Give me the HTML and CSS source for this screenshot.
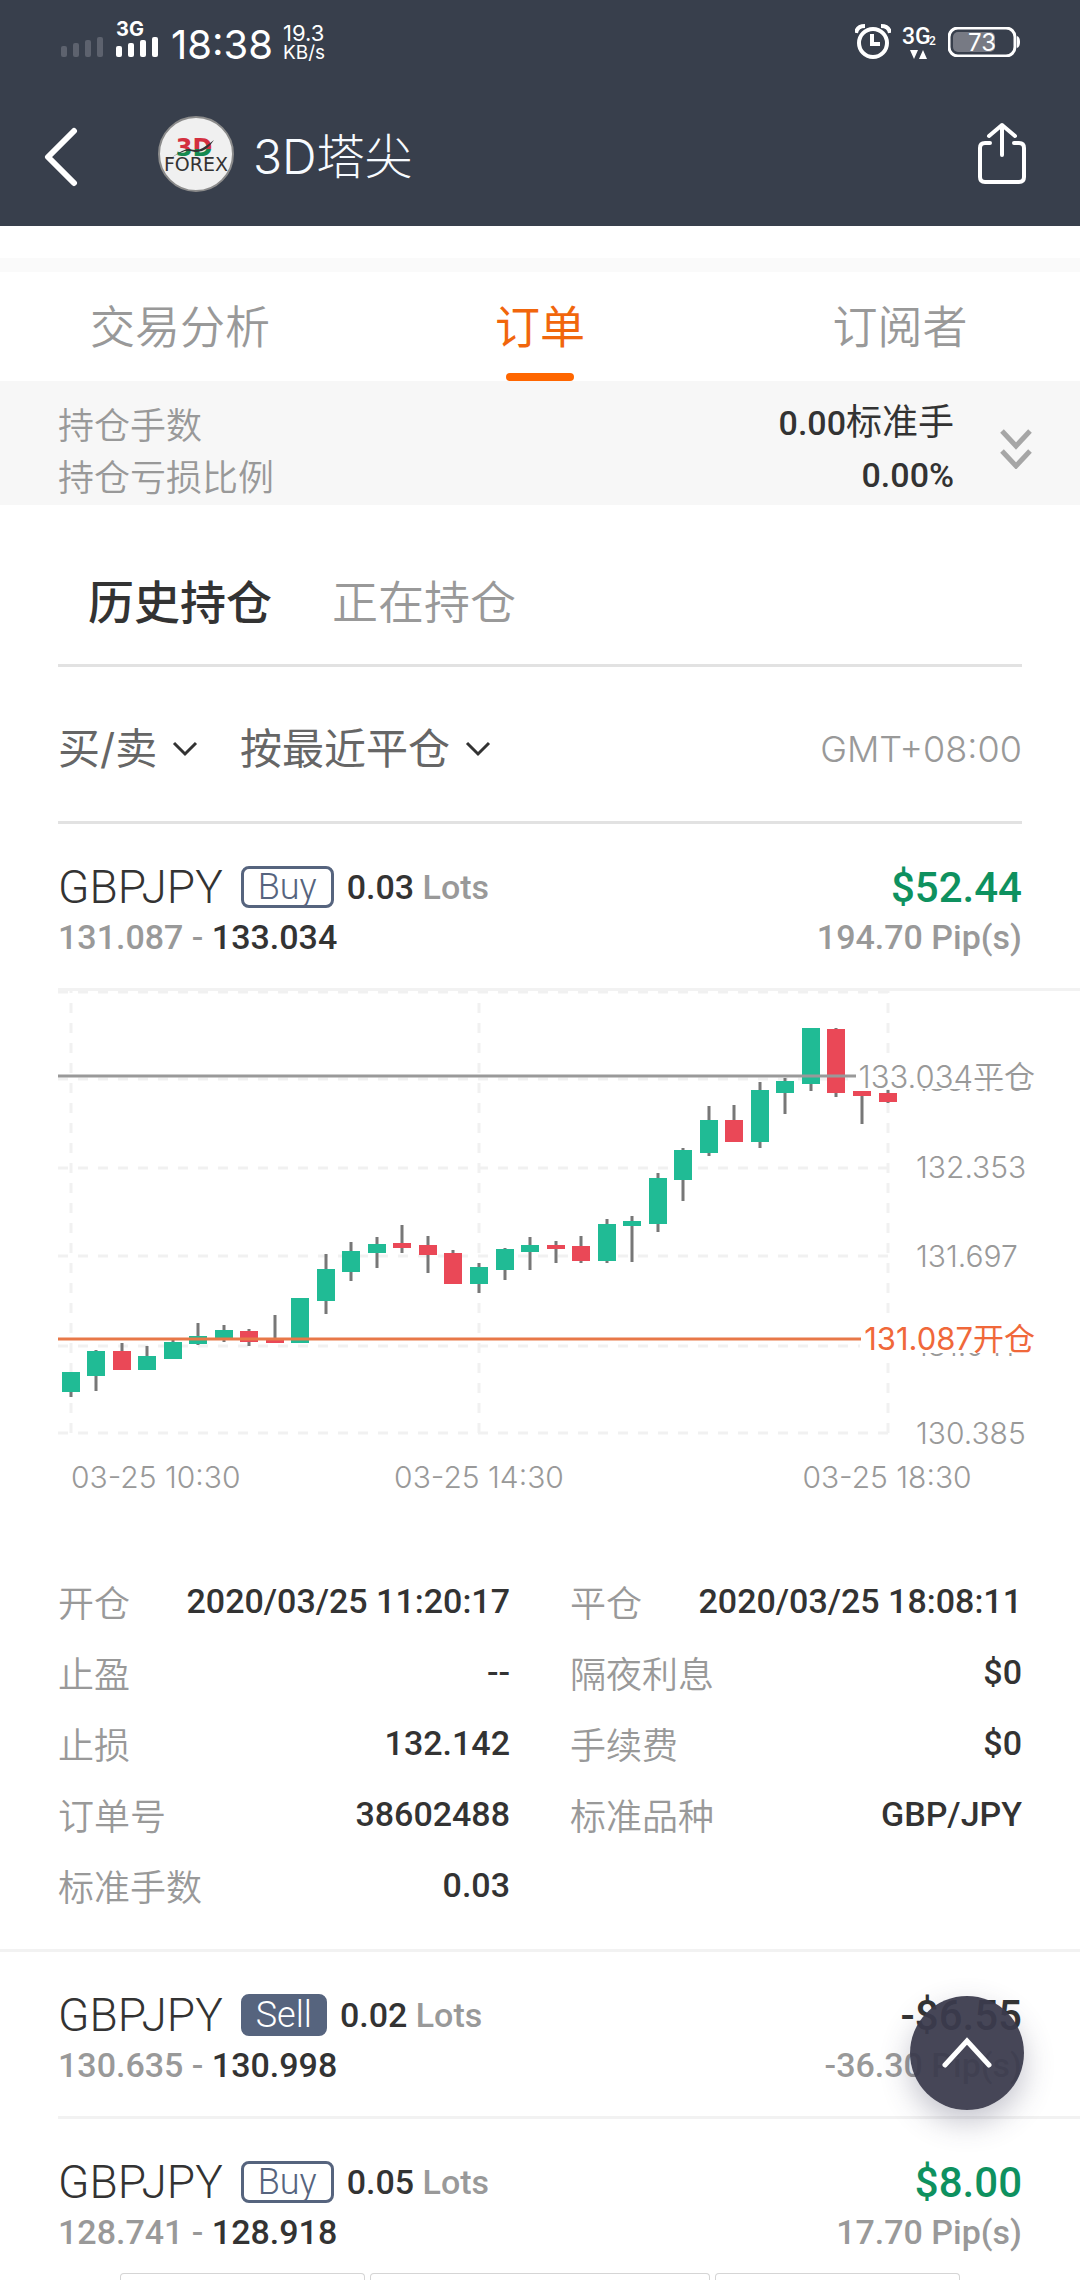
FILE: index.html
```html
<!DOCTYPE html>
<html lang="zh-CN">
<head>
<meta charset="utf-8">
<meta name="viewport" content="width=device-width, initial-scale=1">
<title>3D塔尖</title>
<link rel="stylesheet" href="styles.css">
</head>
<body>
<header class="top">
  <div class="status">
    <svg width="42" height="36" viewBox="0 0 42 36" fill="#5d626e" aria-hidden="true">
      <rect x="0" y="25" width="6" height="11" rx="2"/><rect x="12" y="22" width="6" height="14" rx="2"/><rect x="24" y="19" width="6" height="17" rx="2"/><rect x="36" y="16" width="6" height="20" rx="2"/>
    </svg>
    <div class="signal">
      <span class="signal-type">3G</span>
      <svg width="42" height="20" viewBox="0 0 42 20" fill="#fff" aria-hidden="true">
        <rect x="0" y="9" width="6" height="11" rx="2"/><rect x="12" y="6" width="6" height="14" rx="2"/><rect x="24" y="3" width="6" height="17" rx="2"/><rect x="36" y="0" width="6" height="20" rx="2"/>
      </svg>
    </div>
    <time class="clock">18:38</time>
    <div class="speed"><span class="speed-value">19.3</span><span>KB/s</span></div>
    <div class="status-right">
      <svg width="36" height="36" viewBox="0 0 36 36" fill="none" stroke="#fff" aria-hidden="true">
        <circle cx="18" cy="19" r="14" stroke-width="4"/>
        <path d="M17 10v10h8" stroke-width="4"/>
        <path d="M1 9Q2 2 10 2M26 2Q34 2 35 9" stroke-width="4"/>
      </svg>
      <svg class="data" width="35" height="38" viewBox="0 0 35 38" fill="#fff" aria-hidden="true">
        <text x="0" y="21" font-size="23" class="data-text">3G</text>
        <text x="27" y="22" font-size="12" class="data-text">2</text>
        <path d="M8 27h8l-4 9zM17 36h8l-4-9z"/>
      </svg>
      <svg width="72" height="30" viewBox="0 0 72 30" aria-hidden="true">
        <rect x="5" y="5" width="42" height="20" rx="5" fill="#777a84"/>
        <rect x="1" y="1" width="66" height="28" rx="9" fill="none" stroke="#fff" stroke-width="3"/>
        <path d="M69 9q3 1 3 6t-3 6z" fill="#fff"/>
        <text x="34" y="24" font-size="24" text-anchor="middle" class="battery-text">73</text>
      </svg>
    </div>
  </div>
  <nav class="titlebar">
    <button class="icon-button back" aria-label="返回">
      <svg width="34" height="60" viewBox="0 0 34 60" fill="none" stroke="#fff" stroke-width="6" stroke-linecap="round" stroke-linejoin="round"><path d="M30 4L4 30l26 26"/></svg>
    </button>
    <svg class="avatar" width="76" height="76" viewBox="0 0 76 76" role="img" aria-label="3D Forex">
      <defs><linearGradient id="brand" x1="0" y1="0" x2="0" y2="1"><stop offset=".55" stop-color="#d3303f"/><stop offset=".55" stop-color="#168a50"/></linearGradient></defs>
      <circle cx="38" cy="38" r="37" fill="#f0f0f0" stroke="#8b8b8b" stroke-width="2"/>
      <text x="36" y="40" font-size="24" text-anchor="middle" fill="url(#brand)" class="logo-mark">3D</text>
      <path d="M13 42q12-9 18-9 4 1 7 1 6 0 18-10-8 13-19 12-7-2-10-1-7 2-14 7z" fill="#333"/>
      <text x="38" y="55" font-size="19" text-anchor="middle" fill="#333" class="logo-name">FOREX</text>
    </svg>
    <h1 class="title">3D塔尖</h1>
    <button class="icon-button share" aria-label="分享">
      <svg width="50" height="62" viewBox="0 0 50 62" fill="none" stroke="#fff" stroke-width="4" stroke-linecap="round" stroke-linejoin="round"><path d="M13 21H8q-5 0-5 5v29q0 5 5 5h34q5 0 5-5V26q0-5-5-5h-5M25 33V3M12 14L25 3l13 11"/></svg>
    </button>
  </nav>
</header>
<main>
  <div class="spacer"></div>
  <nav class="tabs">
    <button class="tab">交易分析</button>
    <button class="tab tab-active">订单</button>
    <button class="tab">订阅者</button>
  </nav>
  <section class="summary">
    <dl class="summary-list">
      <div class="pair"><dt>持仓手数</dt><dd>0.00<span class="unit">标准手</span></dd></div>
      <div class="pair"><dt>持仓亏损比例</dt><dd>0.00%</dd></div>
    </dl>
    <button class="icon-button" aria-label="展开">
      <svg width="32" height="40" viewBox="0 0 32 40" fill="none" stroke="#a6a6a6" stroke-width="5"><path d="M2 2l14 15L30 2M2 22l14 15 14-15"/></svg>
    </button>
  </section>
  <nav class="subtabs">
    <button class="subtab subtab-active">历史持仓</button>
    <button class="subtab">正在持仓</button>
  </nav>
  <form class="filters">
    <label class="filter">
      <select aria-label="方向"><option>买/卖</option></select>
      <svg width="26" height="16" viewBox="0 0 26 16" fill="none" stroke="#333" stroke-width="3"><path d="M2 2l11 11L24 2"/></svg>
    </label>
    <label class="filter">
      <select aria-label="排序"><option>按最近平仓</option></select>
      <svg width="26" height="16" viewBox="0 0 26 16" fill="none" stroke="#333" stroke-width="3"><path d="M2 2l11 11L24 2"/></svg>
    </label>
    <span class="zone">GMT+08:00</span>
  </form>

  <article class="order">
    <div class="order-line">
      <h2 class="symbol">GBPJPY</h2><span class="side side-buy">Buy</span>
      <span class="lots">0.03 <span class="muted">Lots</span></span>
      <span class="profit gain">$52.44</span>
    </div>
    <div class="order-line prices">
      <span><span class="muted">131.087 -</span> 133.034</span>
      <span class="pips">194.70 Pip(s)</span>
    </div>
  </article>

  <svg class="chart" viewBox="0 0 1080 520" role="img" aria-label="GBPJPY 03-25 10:30 – 18:30">
    <g class="grid">
      <path d="M58 1H898M58 88H898M58 177H898M58 265H898M58 355H898M58 442H898"/>
      <path d="M71 0V442M479 0V442M888 0V442" stroke-dashoffset="8"/>
    </g>
    <path class="wick" d="M71 381V406M96 359V400M122 352V379M147 355V379M173 349V368M198 332V354M224 334V351M249 338V355M275 324V352M326 263V323M351 251V290M377 246V277M402 234V262M428 245V282M453 259V293M479 272V302M505 257V289M530 246V279M556 250V272M581 245V272M607 228V272M632 225V271M658 182V241M683 157V210M709 115V165M734 114V151M760 91V157M785 87V123M811 37V100M836 37V106M862 100V133M888 99V112"/>
    <path class="rise" d="M62 381h18v20h-18zM87 360h18v25h-18zM138 365h18v14h-18zM164 351h18v17h-18zM189 345h18v8h-18zM215 339h18v9h-18zM291 307h18v45h-18zM317 278h18v32h-18zM342 260h18v21h-18zM368 253h18v9h-18zM470 276h18v17h-18zM496 258h18v21h-18zM521 254h18v7h-18zM598 233h18v37h-18zM623 230h18v5h-18zM649 187h18v46h-18zM674 159h18v30h-18zM700 129h18v33h-18zM751 99h18v52h-18zM776 90h18v12h-18zM802 37h18v56h-18z"/>
    <path class="fall" d="M113 360h18v19h-18zM240 340h18v11h-18zM266 348h18v4h-18zM393 252h18v5h-18zM419 254h18v10h-18zM444 262h18v31h-18zM547 254h18v4h-18zM572 255h18v15h-18zM725 129h18v22h-18zM827 38h18v64h-18zM853 100h18v5h-18zM879 102h18v9h-18z"/>
    <g class="axis">
      <text x="916" y="100">133.009</text>
      <text x="916" y="187">132.353</text>
      <text x="916" y="276">131.697</text>
      <text x="916" y="365">131.041</text>
      <text x="916" y="453">130.385</text>
      <text x="71" y="497">03-25 10:30</text>
      <text x="479" y="497" text-anchor="middle">03-25 14:30</text>
      <text x="887" y="497" text-anchor="middle">03-25 18:30</text>
    </g>
    <rect x="856" y="66" width="180" height="32" fill="#fff"/>
    <path d="M58 85H856" stroke="#999" stroke-width="3"/>
    <text x="1035" y="97" text-anchor="end" class="mark">133.034平仓</text>
    <rect x="860" y="328" width="176" height="34" fill="#fff"/>
    <path d="M58 348H861" stroke="#e87848" stroke-width="3"/>
    <text x="1035" y="359" text-anchor="end" class="mark mark-open">131.087开仓</text>
  </svg>

  <dl class="details">
    <div class="pair"><dt>开仓</dt><dd>2020/03/25 11:20:17</dd></div>
    <div class="pair"><dt>平仓</dt><dd>2020/03/25 18:08:11</dd></div>
    <div class="pair"><dt>止盈</dt><dd>--</dd></div>
    <div class="pair"><dt>隔夜利息</dt><dd>$0</dd></div>
    <div class="pair"><dt>止损</dt><dd>132.142</dd></div>
    <div class="pair"><dt>手续费</dt><dd>$0</dd></div>
    <div class="pair"><dt>订单号</dt><dd>38602488</dd></div>
    <div class="pair"><dt>标准品种</dt><dd>GBP/JPY</dd></div>
    <div class="pair"><dt>标准手数</dt><dd>0.03</dd></div>
  </dl>

  <article class="order">
    <div class="order-line">
      <h2 class="symbol">GBPJPY</h2><span class="side side-sell">Sell</span>
      <span class="lots">0.02 <span class="muted">Lots</span></span>
      <span class="profit">-$6.55</span>
    </div>
    <div class="order-line prices">
      <span><span class="muted">130.635 -</span> 130.998</span>
      <span class="pips">-36.30 Pip(s)</span>
    </div>
  </article>
  <article class="order order-last">
    <div class="order-line">
      <h2 class="symbol">GBPJPY</h2><span class="side side-buy">Buy</span>
      <span class="lots">0.05 <span class="muted">Lots</span></span>
      <span class="profit gain">$8.00</span>
    </div>
    <div class="order-line prices">
      <span><span class="muted">128.741 -</span> 128.918</span>
      <span class="pips">17.70 Pip(s)</span>
    </div>
  </article>
</main>
<footer class="dock"><span class="dock-cell"></span><span class="dock-cell dock-mid"></span><span class="dock-cell"></span></footer>
<button class="to-top" aria-label="回到顶部">
  <svg width="50" height="32" viewBox="0 0 50 32" fill="none" stroke="#fff" stroke-width="5" stroke-linecap="round"><path d="M3 28L25 4l22 24"/></svg>
</button>
</body>
</html>
```
FILE: styles.css
```css
* { box-sizing: border-box; }
body {
  margin: 0;
  background: #fff;
  color: #333;
  font-family: Inter, "Noto Sans CJK SC", sans-serif;
  font-weight: 350;
}
h1, h2, dl, dd { margin: 0; font-weight: inherit; }
button, select {
  margin: 0;
  padding: 0;
  border: 0;
  background: none;
  color: inherit;
  font: inherit;
  appearance: none;
}
svg { display: block; }

.top { background: #383f4c; color: #fff; padding-bottom: 28px; }
.status { display: flex; align-items: flex-start; height: 96px; padding: 21px 60px 0 61px; }
.signal { width: 42px; margin-left: 13px; }
.signal-type { display: block; font-size: 20px; line-height: 16px; font-weight: 700; }
.clock { margin-left: 13px; font-size: 40px; line-height: 48px; font-weight: 400; }
.speed { display: flex; flex-direction: column; margin-left: 10px; padding-top: 2px; font-size: 19px; line-height: 20px; font-weight: 400; }
.speed-value { font-size: 22px; }
.status-right { display: flex; align-items: center; gap: 11px; margin-left: auto; padding-top: 2px; }
.data { overflow: visible; }
.data-text { font-family: Roboto, sans-serif; font-weight: 500; }
.battery-text { fill: #fff; font-weight: 400; }
.titlebar { display: flex; align-items: center; height: 102px; padding: 0 53px 0 44px; }
.icon-button { display: flex; flex: none; }
.back { margin: 20px 80px 0 0; }
.share { margin-top: 12px; }
.avatar { margin-top: 14px; }
.logo-mark { font-family: "DejaVu Sans", sans-serif; font-weight: 700; }
.logo-name { font-family: "DejaVu Sans", sans-serif; font-weight: 400; }
.title { flex: 1; margin-left: 19px; padding-top: 20px; font-size: 48px; line-height: 64px; font-weight: 300; color: #f7fbff; }

.spacer { height: 46px; border-bottom: 14px solid #fafafa; }
.tabs { display: grid; grid-template-columns: repeat(3, 1fr); justify-items: center; height: 109px; }
.tab { display: flex; flex-direction: column; align-items: center; justify-content: space-between; padding-top: 23px; font-size: 45px; line-height: 66px; color: #999; }
.tab-active { color: #f1660c; font-weight: 400; }
.tab-active::after { content: ""; width: 68px; height: 8px; border-radius: 4px; background: #ff6600; }

.summary { display: flex; align-items: center; gap: 46px; padding: 16px 48px 4px 58px; background: #f7f7f7; }
.summary-list { flex: 1; }
.pair { display: flex; justify-content: space-between; align-items: center; }
.pair dt { font-size: 36px; color: #999; white-space: nowrap; }
.pair dd { font-family: Roboto, "Noto Sans CJK SC", sans-serif; font-size: 34px; line-height: 36px; font-weight: 500; white-space: nowrap; }
.summary .pair { height: 52px; }
.unit { font-size: 36px; line-height: 36px; font-weight: 400; }

.subtabs { display: flex; gap: 60px; height: 162px; margin: 0 58px; padding: 64px 30px 0; border-bottom: 3px solid #e2e2e2; }
.subtab { height: 66px; font-size: 46px; line-height: 66px; color: #999; }
.subtab-active { color: #333; font-weight: 500; }
.filters { display: flex; align-items: center; height: 157px; margin: 0 58px; padding-top: 9px; border-bottom: 3px solid #e2e2e2; color: #666; }
.filter { display: flex; align-items: center; gap: 14px; margin-right: 42px; }
.filter select { font-size: 42px; line-height: 60px; font-weight: 400; }
.zone { margin-left: auto; font-size: 36px; font-weight: 300; color: #999; }

.order { margin-left: 58px; padding: 38px 58px 26px 0; border-bottom: 3px solid #f2f2f2; font-family: Roboto, sans-serif; font-weight: 300; }
.order-last { border-bottom: 0; padding-bottom: 16px; }
.order-line { display: flex; align-items: center; height: 50px; }
.symbol { font-size: 46px; line-height: 50px; }
.side { height: 42px; margin-left: 18px; padding: 0 14px; border: 3px solid #56647e; border-radius: 8px; font-size: 36px; line-height: 36px; color: #56647e; }
.side-sell { padding: 0 12px; background: #56647e; color: #fff; }
.lots { margin-left: 13px; font-size: 34px; font-weight: 500; }
.muted, .pips { color: #999; }
.profit { margin-left: auto; font-size: 42px; font-weight: 500; }
.gain { color: #0e915f; }
.prices { justify-content: space-between; font-size: 34px; font-weight: 500; }

.chart { width: 100%; height: auto; overflow: visible; }
.grid { fill: none; stroke: #f1f1f1; stroke-width: 3; stroke-dasharray: 10 10; }
.wick { stroke: #777; stroke-width: 3; }
.rise { fill: #20bb95; }
.fall { fill: #ea4857; }
.axis { fill: #999; font-size: 30px; font-weight: 300; }
.mark { fill: #999; font-size: 31px; }
.mark-open { fill: #f0683a; font-weight: 400; }

.details { display: grid; grid-template-columns: 1fr 1fr; column-gap: 60px; padding: 54px 58px 29px; border-bottom: 3px solid #f2f2f2; }
.details .pair { height: 71px; }

.dock { display: flex; gap: 5px; height: 8px; padding: 0 120px; border-bottom: 1px solid #ccc; }
.dock-cell { flex: 245; border: 1px solid #d5d5d5; border-bottom: 0; background: #fff; border-radius: 4px 4px 0 0; }
.dock-mid { flex: 340; }

.to-top {
  position: fixed;
  right: 56px;
  bottom: 170px;
  display: grid;
  place-items: center;
  width: 114px;
  height: 114px;
  border-radius: 50%;
  background: rgba(58, 58, 77, .94);
  box-shadow: 0 12px 30px rgba(60, 60, 90, .3);
}
```
